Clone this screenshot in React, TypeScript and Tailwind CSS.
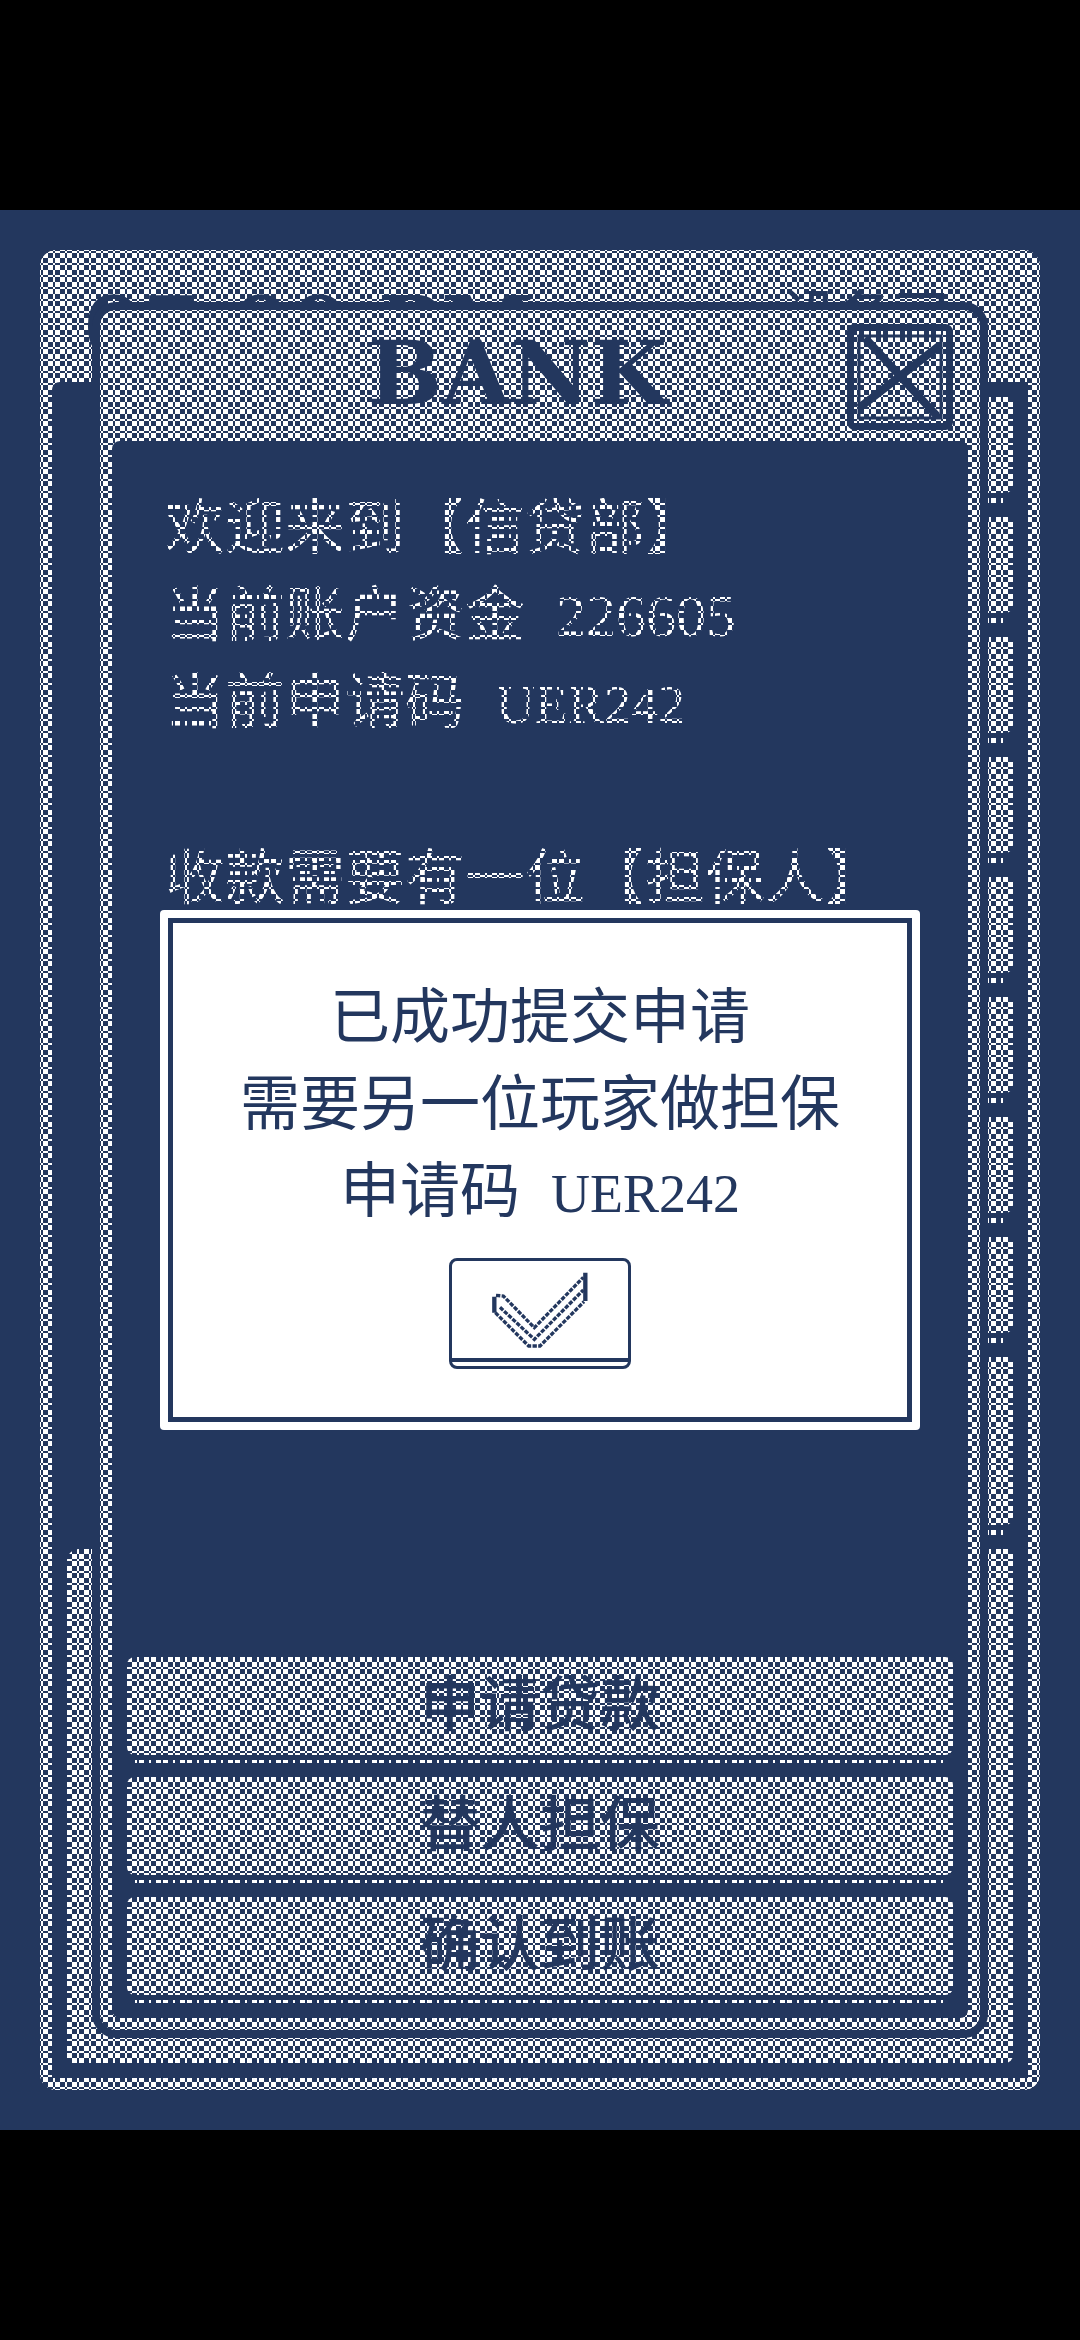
import React from 'react';

const actions = ['申请贷款', '替人担保', '确认到账'];
const backRows = [1, 2, 3, 4, 5, 6, 7, 8];

// Everything white under this layer becomes a checkerboard of dots.
const Dither: React.FC = () => (
  <div
    aria-hidden="true"
    className="pointer-events-none z-10 col-start-1 row-start-1 mix-blend-darken bg-[length:100%_100%,24px_24px,24px_24px] [background-blend-mode:lighten,difference,normal] [background-image:linear-gradient(#23375e,#23375e),linear-gradient(90deg,#000_0_5px,#fff_5px_7px,#000_7px_12px,#fff_12px_17px,#000_17px_19px,#fff_19px_24px),linear-gradient(#fff_0_5px,#000_5px_7px,#fff_7px_12px,#000_12px_17px,#fff_17px_19px,#000_19px_24px)]"
  />
);

const BackWindow: React.FC = () => (
  <div className="col-start-1 row-start-1 m-10 flex flex-col rounded-2xl bg-white px-3 pb-3">
    <div className="flex h-[132px] items-start justify-between pt-9 pr-[78px] pl-8 leading-none whitespace-nowrap">
      <span className="font-['DejaVu_Serif',serif] text-[84px] font-bold">07:00 PM</span>
      <span className="pt-1 text-[56px] font-medium">设备司</span>
    </div>
    <div className="flex flex-1 flex-col gap-[14px] rounded-tl-lg bg-[#23375e] p-[15px]">
      {backRows.map((row) => (
        <div key={row} className="flex h-[106px] w-1/2 flex-col self-end">
          <div className="flex-1 rounded-br-lg bg-white" />
          <div className="mx-2 mt-[5px] h-[5px] bg-white" />
        </div>
      ))}
      <div className="flex h-[178px] w-1/2 flex-col self-end">
        <div className="flex-1 rounded-br-lg bg-white" />
        <div className="mx-2 mt-[5px] h-[5px] bg-white" />
      </div>
      <div className="flex-1 rounded-tl-xl rounded-br-lg bg-white" />
    </div>
  </div>
);

const CloseIcon: React.FC = () => (
  <svg viewBox="0 0 106 106" className="size-[106px]" fill="none" stroke="currentColor">
    <rect x="3.5" y="3.5" width="99" height="99" rx="4" strokeWidth="7" />
    <rect x="12" y="12" width="82" height="82" strokeWidth="3" />
    <path d="M18 14 L90 92 M92 22 L12 84" strokeWidth="8" />
  </svg>
);

const BankWindow: React.FC = () => (
  <div className="z-10 col-start-1 row-start-1 m-[100px] flex flex-col rounded-2xl border-12 border-white bg-white ring-8 ring-[#23375e]">
    <header className="flex h-[119px] items-start pt-0.5 pr-[15px] pl-19">
      <h1 className="flex-1 text-center font-['DejaVu_Serif',serif] text-[88px] leading-[98px] font-bold">
        BANK
      </h1>
      <button type="button" aria-label="关闭">
        <CloseIcon />
      </button>
    </header>
    <div className="flex flex-1 flex-col rounded-lg bg-[#23375e] p-[15px]">
      <div className="px-[38px] pt-[30px] text-[60px] leading-[87px] whitespace-nowrap text-white">
        <p>欢迎来到【信贷部】</p>
        <p>
          当前账户资金 <span className="ml-4">226605</span>
        </p>
        <p>
          当前申请码 <span className="ml-4 text-[54px]">UER242</span>
        </p>
        <p className="mt-[87px]">收款需要有一位【担保人】</p>
      </div>
      <div className="mt-auto flex flex-col gap-[14px]">
        {actions.map((label) => (
          <button key={label} type="button" className="flex h-[106px] flex-col">
            <span className="w-full flex-1 rounded-lg bg-white text-[60px] leading-[98px] font-medium">
              {label}
            </span>
            <span className="mx-2 mt-[5px] h-[5px] self-stretch bg-white" />
          </button>
        ))}
      </div>
    </div>
  </div>
);

const CheckIcon: React.FC = () => (
  <svg viewBox="0 0 300 240" className="h-20 w-25" fill="none" stroke="currentColor" strokeWidth="10">
    <path d="M13 80 V128 M286 8 V93" strokeWidth="13" />
    <path
      d="M18 76 L40 78 L133 173 L280 22 M30 112 L133 208 L280 60 M16 128 L116 228 L150 228 L282 95"
      strokeDasharray="13 4"
    />
  </svg>
);

const ConfirmDialog: React.FC = () => (
  <div
    role="dialog"
    aria-label="已成功提交申请"
    className="z-20 col-start-1 row-start-1 mx-40 self-center rounded-sm bg-white p-2"
  >
    <div className="flex flex-col items-center border-[5px] border-[#23375e] pt-[52px] pb-12 text-center text-[60px] leading-[87px] whitespace-nowrap">
      <p>已成功提交申请</p>
      <p>需要另一位玩家做担保</p>
      <p>
        申请码 <span className="ml-4 text-[54px]">UER242</span>
      </p>
      <button
        type="button"
        aria-label="确定"
        className="mt-5 flex h-[111px] w-[182px] flex-col rounded-lg border-3 border-[#23375e]"
      >
        <span className="flex w-full flex-1 items-center justify-center border-b-4 border-[#23375e]">
          <CheckIcon />
        </span>
        <span className="h-1" />
      </button>
    </div>
  </div>
);

const App: React.FC = () => {
  return (
    <main className="flex min-h-screen flex-col bg-black py-[210px] font-['Liberation_Serif','Noto_Sans_CJK_SC',sans-serif] text-[#23375e]">
      <section className="relative isolate grid flex-1 bg-[#23375e]">
        <BackWindow />
        <BankWindow />
        <Dither />
        <ConfirmDialog />
      </section>
    </main>
  );
};

export default App;
